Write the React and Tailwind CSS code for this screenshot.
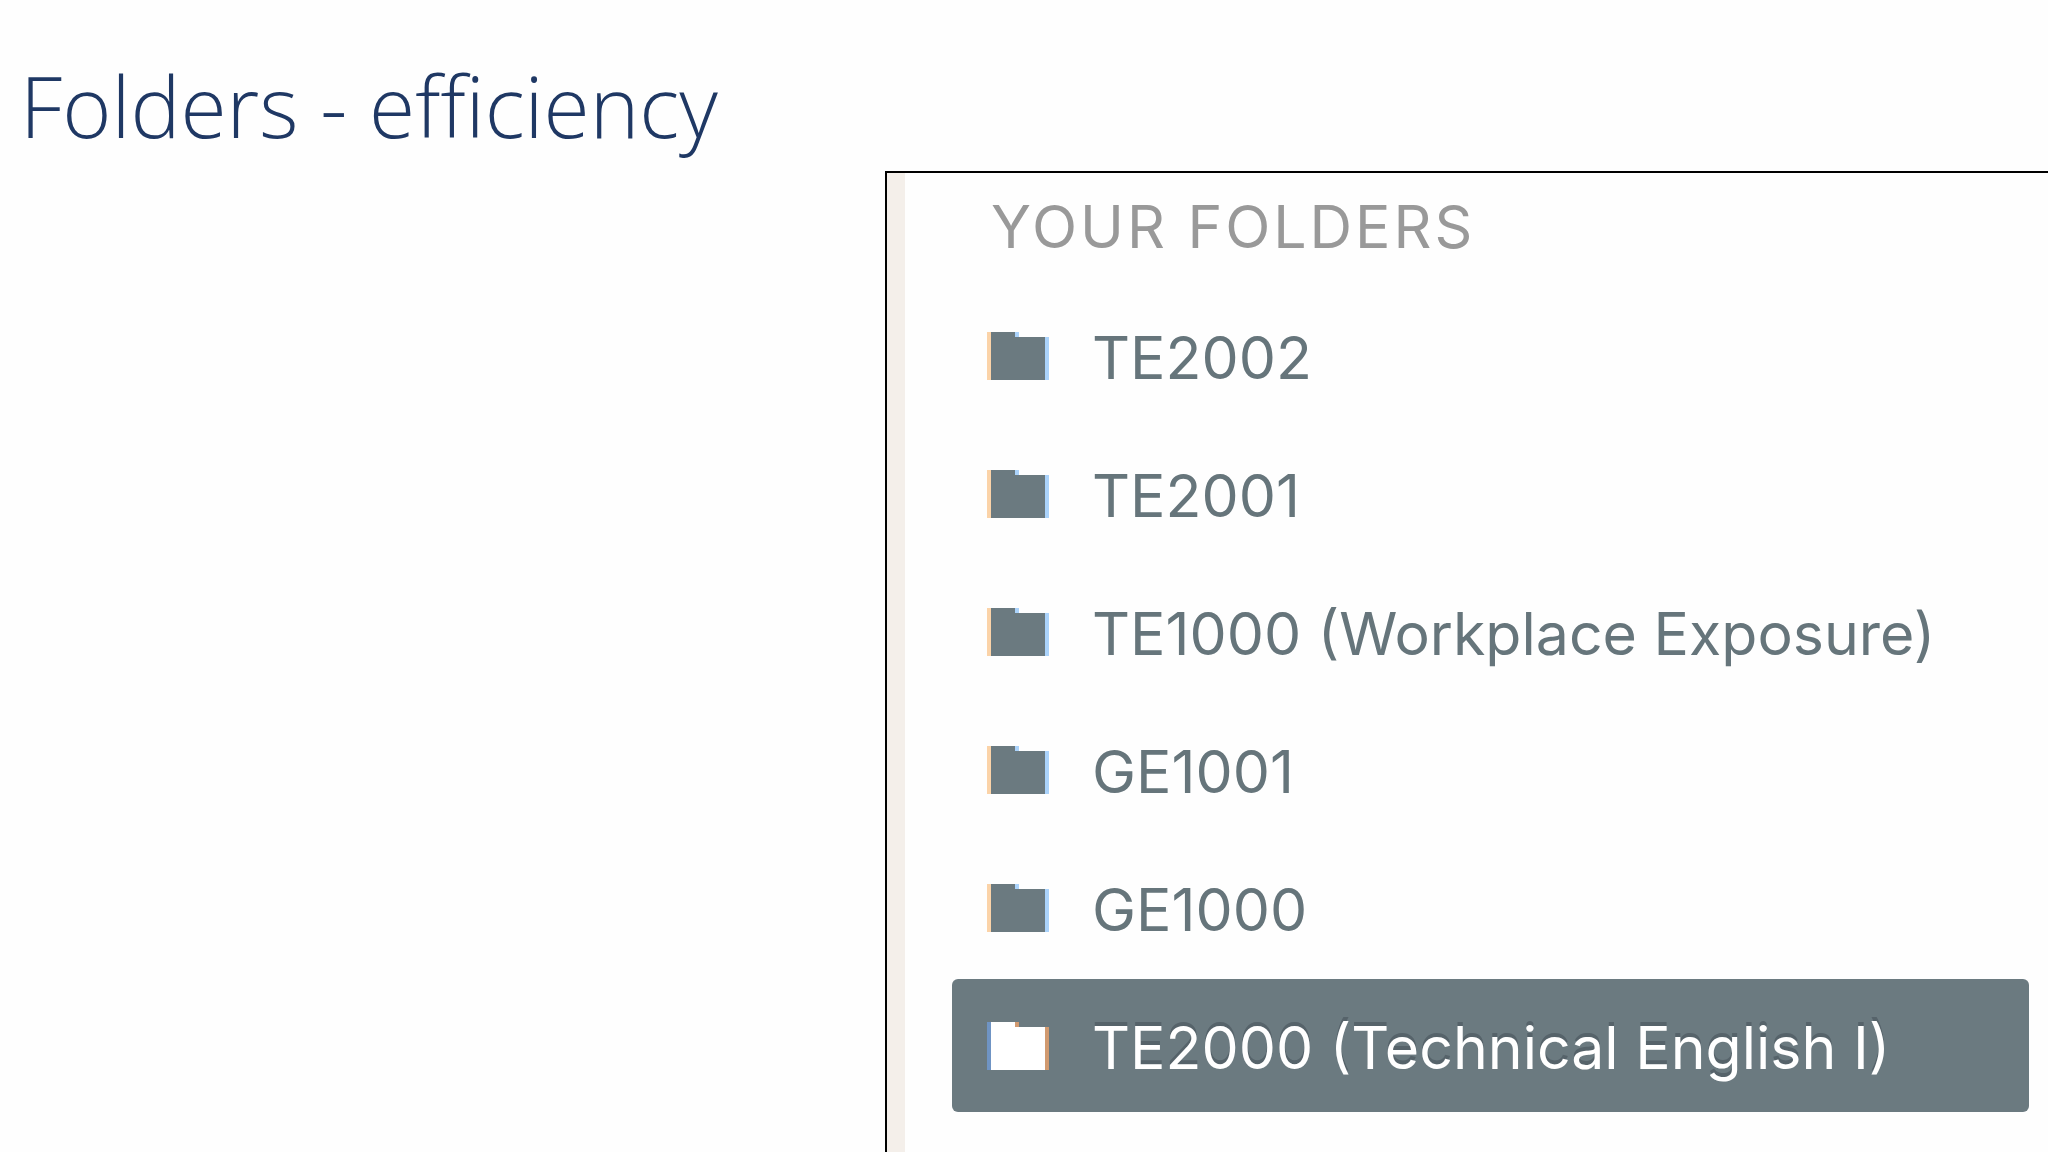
import clsx from "clsx";
import { useState } from "react";

const FOLDERS = [
  "TE2002",
  "TE2001",
  "TE1000 (Workplace Exposure)",
  "GE1001",
  "GE1000",
  "TE2000 (Technical English I)",
];

function FolderIcon({ active }) {
  return (
    <svg
      viewBox="0 0 62 48"
      className={clsx("h-12 w-[62px] shrink-0", active ? "text-white" : "text-[#6b7a80]")}
      shapeRendering="crispEdges"
      aria-hidden="true"
    >
      <path fill={active ? "#6f94c4" : "#fbd3a8"} d="M0 0h4v48H0z" />
      <path fill={active ? "#d19a70" : "#abd3fb"} d="M28 0h4v5h-4zM57 5h5v43h-5z" />
      <path fill="currentColor" d="M4 0h24v5h30v43H4z" />
    </svg>
  );
}

function FolderRow({ name, active, onSelect }) {
  return (
    <li>
      <button
        type="button"
        onClick={onSelect}
        aria-pressed={active}
        className={clsx(
          "flex h-[133px] w-full items-center gap-[43px] rounded-md pl-[35px] text-left text-[59px] leading-[72px] whitespace-nowrap",
          active
            ? "bg-[#6b7a80] text-white [text-shadow:0_-4px_0_#56636a]"
            : "text-[#66757b]"
        )}
      >
        <FolderIcon active={active} />
        <span className="pt-1">{name}</span>
      </button>
    </li>
  );
}

function App() {
  const [selected, setSelected] = useState(FOLDERS[5]);

  return (
    <div className="flex h-screen flex-col overflow-hidden bg-[#fefefe] font-['Inter',sans-serif]">
      <h1 className="h-[171px] shrink-0 pt-[50px] pl-5 font-['Open_Sans',sans-serif] text-[84px] leading-[112px] font-light text-[#1f3864]">
        Folders - efficiency
      </h1>
      <section className="ml-[885px] min-h-0 flex-1 border-t-2 border-l-2 border-black">
        <div className="h-full border-l-[18px] border-[#f4efea] pr-[19px] pl-[47px]">
          <h2 className="pt-[18px] pb-[26px] pl-[39px] text-[59px] leading-[72px] tracking-wider text-[#999999]">
            YOUR FOLDERS
          </h2>
          <ul className="flex flex-col gap-[5px]">
            {FOLDERS.map((name) => (
              <FolderRow
                key={name}
                name={name}
                active={name === selected}
                onSelect={() => setSelected(name)}
              />
            ))}
          </ul>
        </div>
      </section>
    </div>
  );
}

export default App;
